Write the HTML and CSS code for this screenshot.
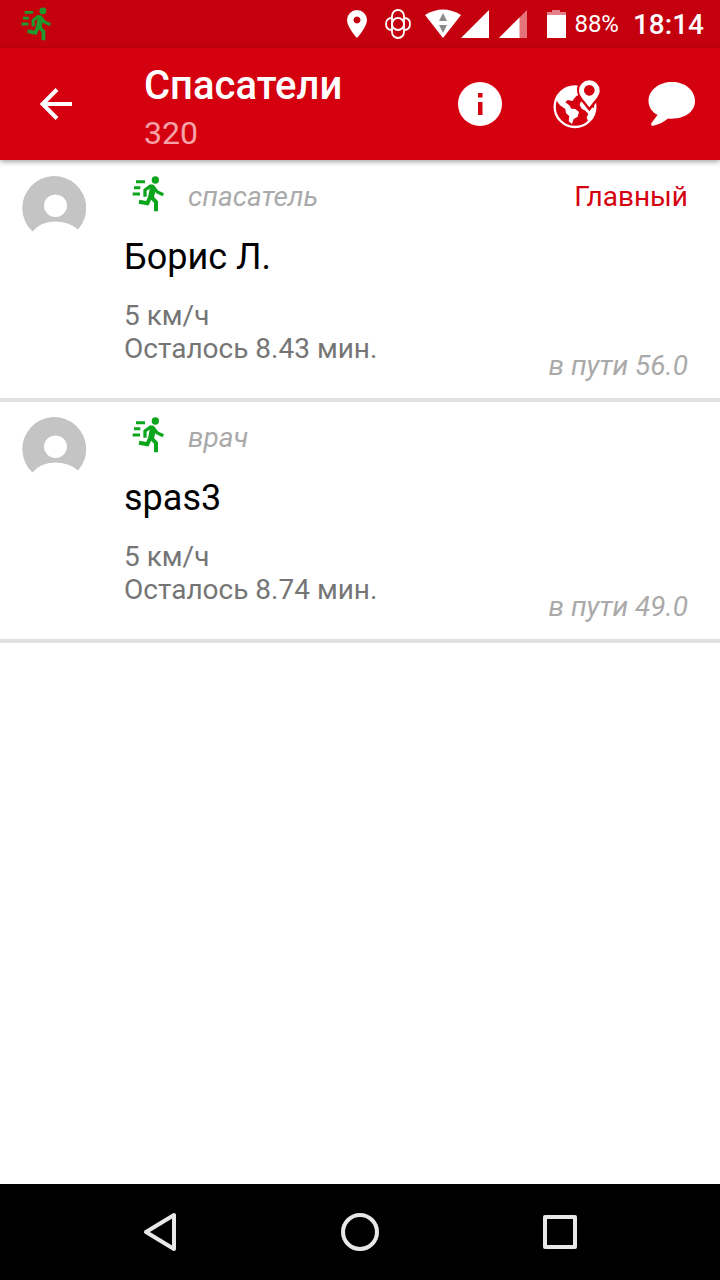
FILE: index.html
```html
<!DOCTYPE html>
<html lang="ru">
<head>
<meta charset="utf-8">
<meta name="viewport" content="width=device-width, initial-scale=1">
<title>Спасатели</title>
<link rel="stylesheet" href="styles.css">
</head>
<body>
<svg class="sprite" aria-hidden="true">
  <symbol id="runner" viewBox="0 0 96 108">
    <g fill="none" stroke="currentColor" stroke-width="9">
      <path d="M12 17H39M6 35H25M2 54H24"/>
      <path d="M39 62V42L54 31H62L76 48L94 56" stroke-width="10"/>
      <path d="M57 62L72 78V106M54 64L46 82L21 77" stroke-width="12"/>
    </g>
    <path d="M50 27Q66 22 72 38L65 68L47 70L53 38Z" fill="currentColor"/>
    <circle cx="70" cy="12" r="11" fill="currentColor"/>
  </symbol>
  <symbol id="avatar" viewBox="0 0 64 64">
    <path fill="#c4c4c4" fill-rule="evenodd" d="M10.500 55.500A32 32 0 1 1 56 53.500Q47 45.500 33 45.500Q18 46 10.500 55.500ZM33.500 18.500a11.500 11.200 0 1 0 .01 0Z"/>
  </symbol>
</svg>

<div class="screen">
  <div class="status">
    <svg class="status-runner" width="30" height="34"><use href="#runner"/></svg>
    <div class="status-icons">
      <svg width="20" height="30" viewBox="0 0 20 30" fill="#fff"><path fill-rule="evenodd" d="M10 1A10 10 0 0 0 0 11C0 18 10 29 10 29S20 18 20 11A10 10 0 0 0 10 1ZM10 7.500a3.500 3.500 0 1 0 .01 0Z"/></svg>
      <svg class="gap-l" width="26" height="30" viewBox="0 0 26 30" fill="none" stroke="#fff" stroke-width="1.800"><rect x="7" y="1" width="12" height="28" rx="6"/><path d="M7 9C3 9 1 11.500 1 15S3 21 7 21M19 9C23 9 25 11.500 25 15S23 21 19 21"/><circle cx="13" cy="15" r="6"/></svg>
      <svg class="gap-m" width="36" height="30" viewBox="0 0 36 30"><path fill="#fff" d="M0 6Q18-5 36 6L18 29Z"/><path fill="#8a8a8a" d="M18 4L22 12H14ZM14 16H22L18 24Z"/></svg>
      <svg width="28" height="30" viewBox="0 0 28 30"><path fill="#fff" d="M28 1V29H0Z"/></svg>
      <svg class="gap-s" width="28" height="30" viewBox="0 0 28 30"><path fill="#e5737a" d="M28 1V29H0Z"/><path fill="#fff" d="M20.500 8.500V29H0Z"/></svg>
      <svg class="gap-b" width="19" height="30" viewBox="0 0 19 30"><path fill="#e5808a" d="M5 1H13V3H19V6H0V3H5Z"/><path fill="#fff" d="M0 6H19V29H0Z"/></svg>
      <span class="battery">88%</span>
      <time class="clock">18:14</time>
    </div>
  </div>

  <header class="bar">
    <button class="bar-button back" aria-label="Назад">
      <svg width="34" height="32" viewBox="0 0 34 32" fill="none" stroke="#fff" stroke-width="4"><path d="M18 1.500L3.500 16L18 30.500M3 16H33"/></svg>
    </button>
    <div class="heading">
      <h1 class="title">Спасатели</h1>
      <p class="subtitle">320</p>
    </div>
    <button class="bar-button" aria-label="Информация">
      <svg width="44" height="44" viewBox="0 0 44 44"><circle cx="22" cy="22" r="22" fill="#fff"/><path fill="#d5000f" d="M20 11H24.500V15.500H20ZM20 20H24.500V33H20Z"/></svg>
    </button>
    <button class="bar-button" aria-label="Карта">
      <svg width="48" height="50" viewBox="-3 -3 144 150">
        <circle cx="66" cy="80" r="61" fill="none" stroke="#fff" stroke-width="7"/>
        <path fill="#fff" d="M12 54L26 34L48 21L76 19L77 38L84 42L70 48L63 56L58 63L44 60L37 67L49 76L55 86L67 87L78 96L74 110L62 117L57 132L47 124L49 109L39 99L37 87L21 76L12 64ZM83 66L93 64L103 79L125 84L121 112L106 127L101 112L106 102L97 92L86 86L80 75Z"/>
        <path fill="#d5000f" d="M109-6C87-6 72 9 72 31C72 50 91 71 109 94C127 71 146 50 146 31C146 9 130-6 109-6Z"/>
        <path fill="#fff" fill-rule="evenodd" d="M109 1A31 31 0 0 0 78 32C78 48 94 61 109 82C124 61 140 48 140 32A31 31 0 0 0 109 1ZM109 15a16 16 0 1 0 .01 0Z"/>
      </svg>
    </button>
    <button class="bar-button" aria-label="Чат">
      <svg width="48" height="44" viewBox="0 0 48 44"><path fill="#fff" d="M24 0C11 0 .5 8 .5 19C.5 25 4 30 9.500 33L3.500 41C2.500 43 4 44.500 6 43.500C12 42 16 40 20 36.500C36 38 47 30 47 19C47 8 37 0 24 0Z"/></svg>
    </button>
  </header>

  <main class="content">
    <ul class="list">
      <li class="item">
        <svg class="avatar" width="64" height="64"><use href="#avatar"/></svg>
        <div class="info">
          <div class="role-row"><svg class="role-icon" width="32" height="36"><use href="#runner"/></svg><span class="muted">спасатель</span></div>
          <h2 class="name">Борис Л.</h2>
          <p class="detail">5 км/ч</p>
          <p class="detail">Осталось 8.43 мин.</p>
        </div>
        <div class="side">
          <span class="chief">Главный</span>
          <span class="muted travel">в пути 56.0</span>
        </div>
      </li>
      <li class="item">
        <svg class="avatar" width="64" height="64"><use href="#avatar"/></svg>
        <div class="info">
          <div class="role-row"><svg class="role-icon" width="32" height="36"><use href="#runner"/></svg><span class="muted">врач</span></div>
          <h2 class="name">spas3</h2>
          <p class="detail">5 км/ч</p>
          <p class="detail">Осталось 8.74 мин.</p>
        </div>
        <div class="side">
          <span class="muted travel">в пути 49.0</span>
        </div>
      </li>
    </ul>
  </main>

  <nav class="nav">
    <button class="nav-button" aria-label="Назад"><svg width="40" height="40" viewBox="0 0 40 40"><path d="M34 3V37L6 20Z"/></svg></button>
    <button class="nav-button" aria-label="Домой"><svg width="40" height="40" viewBox="0 0 40 40"><circle cx="20" cy="20" r="17"/></svg></button>
    <button class="nav-button" aria-label="Недавние"><svg width="40" height="40" viewBox="0 0 40 40"><rect x="5" y="5" width="30" height="30"/></svg></button>
  </nav>
</div>
</body>
</html>
```
FILE: styles.css
```css
* {
  box-sizing: border-box;
}

body,
h1,
h2,
p,
ul {
  margin: 0;
  padding: 0;
}

body {
  font-family: Roboto, "Noto Sans", sans-serif;
  background: #fff;
}

svg {
  display: block;
  flex: none;
}

button {
  padding: 0;
  border: 0;
  background: none;
}

.sprite {
  position: absolute;
  width: 0;
  height: 0;
}

.screen {
  display: flex;
  flex-direction: column;
  min-height: 100vh;
}

.status {
  display: flex;
  justify-content: space-between;
  align-items: center;
  height: 48px;
  padding: 0 16px 0 21px;
  background: #c5000e;
  color: #fff;
}

.status-runner {
  color: #1f9a2c;
}

.status-icons {
  display: flex;
  align-items: center;
}

.gap-l {
  margin-left: 18px;
}

.gap-m {
  margin-left: 14px;
}

.gap-s {
  margin-left: 10px;
}

.gap-b {
  margin-left: 20px;
}

.battery {
  margin-left: 8px;
  font-size: 24px;
}

.clock {
  margin-left: 14px;
  font-size: 28px;
  font-weight: 500;
}

.bar {
  display: flex;
  align-items: center;
  height: 112px;
  background: #d5000f;
  color: #fff;
  box-shadow: 0 2px 5px rgba(0, 0, 0, 0.35);
}

.bar-button {
  display: flex;
  justify-content: center;
  align-items: center;
  width: 96px;
  height: 96px;
}

.back {
  width: 112px;
}

.heading {
  flex: 1;
  padding: 10px 0 0 32px;
}

.title {
  font-size: 40px;
  line-height: 48px;
  font-weight: 500;
}

.subtitle {
  font-size: 32px;
  line-height: 46px;
  color: #f5a3a9;
}

.content {
  flex: 1;
  padding-top: 1px;
}

.list {
  list-style: none;
}

.item {
  display: flex;
  padding: 15px 32px 15px 22px;
  border-bottom: 4px solid #e1e1e1;
}

.info {
  flex: 1;
  padding: 0 0 18px 38px;
}

.role-row {
  display: flex;
  align-items: flex-start;
  gap: 24px;
  padding-left: 8px;
}

.role-icon {
  color: #0ca51c;
}

.muted {
  font-size: 28px;
  line-height: 42px;
  font-style: italic;
  color: #aaa;
}

.name {
  margin: 18px 0 20px;
  font-size: 36px;
  line-height: 43px;
  font-weight: 400;
  color: #000;
}

.detail {
  font-size: 28px;
  line-height: 33px;
  color: #757575;
}

.side {
  display: flex;
  flex-direction: column;
  align-items: flex-end;
}

.chief {
  font-size: 28px;
  line-height: 42px;
  color: #d5000f;
}

.travel {
  margin-top: auto;
  line-height: 34px;
}

.nav {
  display: flex;
  height: 96px;
  padding: 0 60px;
  background: #000;
}

.nav-button {
  display: flex;
  flex: 1;
  justify-content: center;
  align-items: center;
  fill: none;
  stroke: #e8e8e8;
  stroke-width: 4;
  stroke-linejoin: round;
}
```
